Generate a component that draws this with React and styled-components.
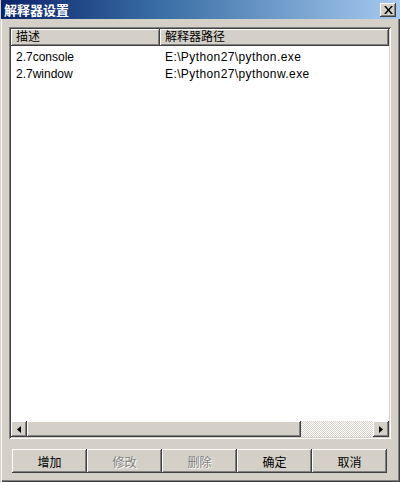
import styled, { createGlobalStyle } from 'styled-components';

const Global = createGlobalStyle`
  html, body { margin: 0; padding: 0; background: #D4D0C8; }
  * { box-sizing: border-box; }
`;

const raised = `
  box-shadow: inset -1px -1px #404040, inset 1px 1px #FFFFFF,
    inset -2px -2px #808080, inset 2px 2px #D4D0C8;
`;

const Janela = styled.div`
  width: 400px;
  height: 482px;
  background: #D4D0C8;
  display: flex;
  flex-direction: column;
  box-shadow: inset 1px 0 #D4D0C8, inset 2px 0 #FFFFFF, inset -1px -1px #404040, inset -2px -2px #808080;
  font-family: "Liberation Sans", "Noto Sans CJK SC", sans-serif;
  font-size: 12px;
  color: #000000;
`;

const Titulo = styled.div`
  height: 19px;
  margin-left: 1px;
  display: flex;
  align-items: center;
  justify-content: space-between;
  padding: 0 4px 0 3px;
  background: linear-gradient(to right, #0A246A 0%, #3A6EA5 40%, #A6CAF0 100%);
  span {
    color: #FFFFFF;
    font-weight: 700;
    font-size: 13px;
  }
`;

const Fechar = styled.div`
  width: 16px;
  height: 14px;
  background: #D4D0C8;
  display: flex;
  align-items: center;
  justify-content: center;
  ${raised}
`;

const Corpo = styled.div`
  flex: 1;
  display: flex;
  flex-direction: column;
  padding: 8px 9px 9px 9px;
`;

const Lista = styled.div`
  height: 412px;
  background: #FFFFFF;
  padding: 2px;
  display: flex;
  flex-direction: column;
  box-shadow: inset 1px 1px #808080, inset -1px -1px #FFFFFF,
    inset 2px 2px #404040, inset -2px -2px #D4D0C8;
`;

const Cabecalho = styled.div`
  display: flex;
  height: 17px;
  background: #D4D0C8;
`;

const Celula = styled.div`
  width: ${p => p.largura};
  flex: ${p => (p.resto ? 1 : 'none')};
  height: 17px;
  padding: 1px 0 0 5px;
  line-height: 15px;
  box-shadow: inset -1px -1px #404040, inset 1px 1px #FFFFFF, inset -2px -2px #808080;
`;

const Linhas = styled.div`
  flex: 1;
  padding-top: 3px;
`;

const Linha = styled.div`
  display: flex;
  height: 17px;
  line-height: 17px;
  div { padding-left: 5px; }
  div:first-child { width: 149px; }
  div:last-child { letter-spacing: 0.4px; }
`;

const Rolagem = styled.div`
  height: 16px;
  display: flex;
  background: repeating-conic-gradient(#FFFFFF 0 25%, #D4D0C8 0 50%) 0 0 / 2px 2px;
`;

const Seta = styled.div`
  width: 16px;
  height: 16px;
  background: #D4D0C8;
  display: flex;
  align-items: center;
  justify-content: center;
  ${raised}
`;

const Polegar = styled.div`
  width: 274px;
  height: 16px;
  background: #D4D0C8;
  ${raised}
`;

const Vazio = styled.div`
  flex: 1;
`;

const Botoes = styled.div`
  display: flex;
  padding: 10px 0 0 3px;
`;

const Botao = styled.button`
  width: 75px;
  height: 24px;
  border: 0;
  padding: 0;
  background: #D4D0C8;
  font-family: "Liberation Sans", "Noto Sans CJK SC", sans-serif;
  font-size: 12px;
  color: ${p => (p.desativado ? '#808080' : '#000000')};
  text-shadow: ${p => (p.desativado ? '1px 1px #FFFFFF' : 'none')};
  box-shadow: inset -1px -1px #404040, inset 1px 1px #FFFFFF, inset -2px -2px #808080;
`;

function App() {
  const interpretes = [
    { desc: '2.7console', caminho: 'E:\\Python27\\python.exe' },
    { desc: '2.7window', caminho: 'E:\\Python27\\pythonw.exe' },
  ];
  const botoes = [
    { nome: '增加' },
    { nome: '修改', desativado: true },
    { nome: '删除', desativado: true },
    { nome: '确定' },
    { nome: '取消' },
  ];

  return (
    <Janela>
      <Global />
      <Titulo>
        <span>解释器设置</span>
        <Fechar>
          <svg width="9" height="8" viewBox="0 0 9 8">
            <path d="M0 0h2l2.5 3 2.5-3h2L5.5 4 9 8H7L4.5 5 2 8H0l3.5-4z" fill="#000" />
          </svg>
        </Fechar>
      </Titulo>
      <Corpo>
        <Lista>
          <Cabecalho>
            <Celula largura="149px">描述</Celula>
            <Celula resto>解释器路径</Celula>
          </Cabecalho>
          <Linhas>
            {interpretes.map(i => (
              <Linha key={i.desc}>
                <div>{i.desc}</div>
                <div>{i.caminho}</div>
              </Linha>
            ))}
          </Linhas>
          <Rolagem>
            <Seta>
              <svg width="4" height="7" viewBox="0 0 4 7"><path d="M4 0v7L0 3.5z" fill="#000" /></svg>
            </Seta>
            <Polegar />
            <Vazio />
            <Seta>
              <svg width="4" height="7" viewBox="0 0 4 7"><path d="M0 0v7l4-3.5z" fill="#000" /></svg>
            </Seta>
          </Rolagem>
        </Lista>
        <Botoes>
          {botoes.map(b => (
            <Botao key={b.nome} desativado={b.desativado}>{b.nome}</Botao>
          ))}
        </Botoes>
      </Corpo>
    </Janela>
  );
}

export default App;
